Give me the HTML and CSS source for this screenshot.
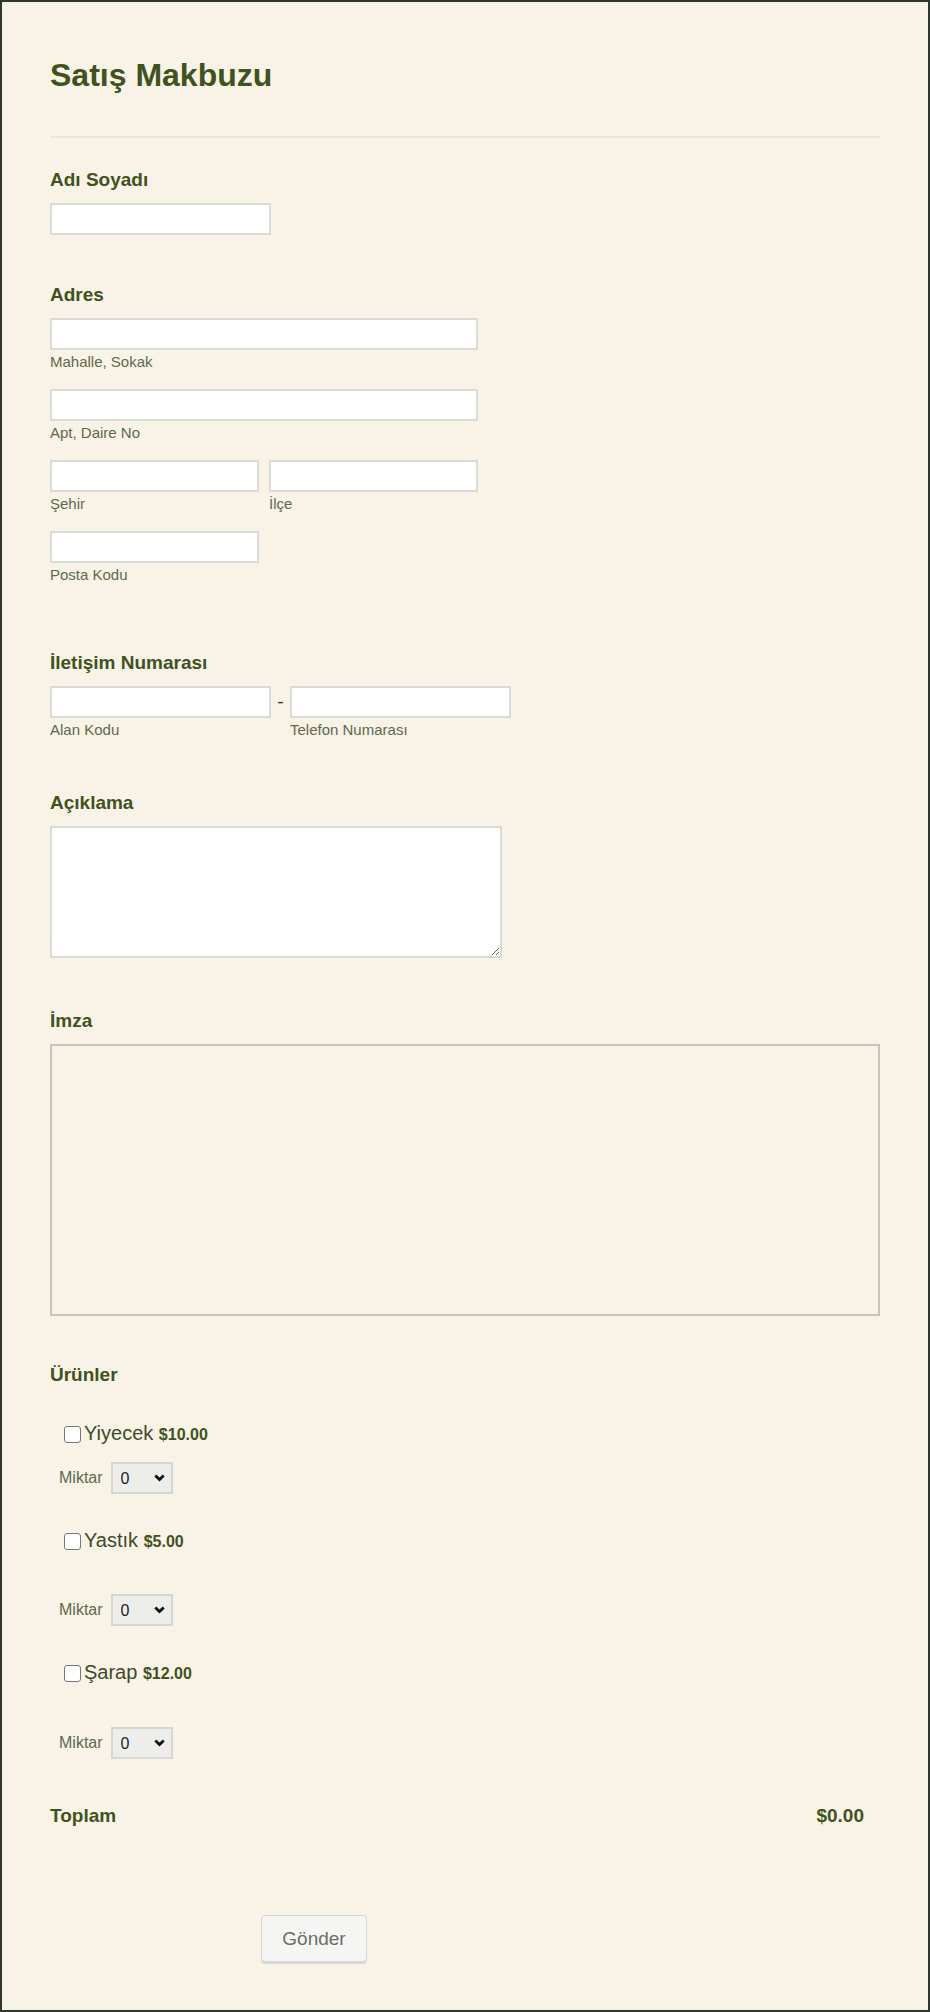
FILE: index.html
```html
<!DOCTYPE html>
<html lang="tr">
<head>
<meta charset="utf-8">
<title>Satış Makbuzu</title>
<link rel="stylesheet" href="styles.css">
</head>
<body>
<div class="page">
  <h1 class="title">Satış Makbuzu</h1>
  <div class="divider"></div>

  <div class="field f-name">
    <label class="label">Adı Soyadı</label>
    <input class="input w-short" type="text">
  </div>

  <div class="field f-address">
    <label class="label">Adres</label>
    <div class="addr-row">
      <div class="col">
        <input class="input w-long" type="text">
        <span class="sub">Mahalle, Sokak</span>
      </div>
    </div>
    <div class="addr-row next">
      <div class="col">
        <input class="input w-long" type="text">
        <span class="sub">Apt, Daire No</span>
      </div>
    </div>
    <div class="addr-row next pair">
      <div class="col">
        <input class="input w-half" type="text">
        <span class="sub">Şehir</span>
      </div>
      <div class="col">
        <input class="input w-half" type="text">
        <span class="sub">İlçe</span>
      </div>
    </div>
    <div class="addr-row next">
      <div class="col">
        <input class="input w-half" type="text">
        <span class="sub">Posta Kodu</span>
      </div>
    </div>
  </div>

  <div class="field f-phone">
    <label class="label">İletişim Numarası</label>
    <div class="phone-row">
      <div class="col">
        <input class="input w-short" type="text">
        <span class="sub">Alan Kodu</span>
      </div>
      <span class="dash">-</span>
      <div class="col">
        <input class="input w-short" type="text">
        <span class="sub">Telefon Numarası</span>
      </div>
    </div>
  </div>

  <div class="field f-desc">
    <label class="label">Açıklama</label>
    <textarea class="textarea"></textarea>
  </div>

  <div class="field f-sign">
    <label class="label">İmza</label>
    <div class="signature"></div>
  </div>

  <div class="field f-products">
    <label class="label">Ürünler</label>

    <div class="product first">
      <input class="check" type="checkbox">
      <span class="pname">Yiyecek <b class="price">$10.00</b></span>
    </div>
    <div class="qty q-first">
      <span class="qty-label">Miktar</span>
      <span class="select-wrap">
        <select class="select"><option>0</option></select>
        <svg class="chev" width="11" height="8" viewBox="0 0 11 8"><path d="M1.3 1.4 L5.5 5.6 L9.7 1.4" fill="none" stroke="#111" stroke-width="2.8"/></svg>
      </span>
    </div>

    <div class="product">
      <input class="check" type="checkbox">
      <span class="pname">Yastık <b class="price">$5.00</b></span>
    </div>
    <div class="qty">
      <span class="qty-label">Miktar</span>
      <span class="select-wrap">
        <select class="select"><option>0</option></select>
        <svg class="chev" width="11" height="8" viewBox="0 0 11 8"><path d="M1.3 1.4 L5.5 5.6 L9.7 1.4" fill="none" stroke="#111" stroke-width="2.8"/></svg>
      </span>
    </div>

    <div class="product">
      <input class="check" type="checkbox">
      <span class="pname">Şarap <b class="price">$12.00</b></span>
    </div>
    <div class="qty q-last">
      <span class="qty-label">Miktar</span>
      <span class="select-wrap">
        <select class="select"><option>0</option></select>
        <svg class="chev" width="11" height="8" viewBox="0 0 11 8"><path d="M1.3 1.4 L5.5 5.6 L9.7 1.4" fill="none" stroke="#111" stroke-width="2.8"/></svg>
      </span>
    </div>
  </div>

  <div class="total">
    <span class="total-label">Toplam</span>
    <span class="total-value">$0.00</span>
  </div>

  <div class="actions">
    <button class="submit" type="button">Gönder</button>
  </div>
</div>
</body>
</html>
```

FILE: styles.css
```css
html, body {
  margin: 0;
  padding: 0;
}
body {
  font-family: "Liberation Sans", Arial, sans-serif;
  background: #f9f2e6;
}
.page {
  box-sizing: border-box;
  width: 930px;
  min-height: 2012px;
  border: 2px solid #2f352f;
  background: #f9f2e6;
  padding: 54px 48px 0 48px;
}
.title {
  margin: 0;
  font-size: 32px;
  line-height: 38px;
  font-weight: bold;
  color: #3f5220;
}
.divider {
  margin-top: 42px;
  height: 2px;
  background: #ebe8e1;
}
.field {
  display: flex;
  flex-direction: column;
  align-items: flex-start;
}
.label {
  display: block;
  font-size: 19px;
  line-height: 22px;
  font-weight: bold;
  color: #3f5220;
  margin-bottom: 12px;
}
.f-name { margin-top: 31px; }
.f-address { margin-top: 49px; }
.f-phone { margin-top: 68px; }
.f-desc { margin-top: 53px; }
.f-sign { margin-top: 52px; }
.f-products { margin-top: 48px; }

.input {
  box-sizing: border-box;
  height: 32px;
  margin: 0;
  border: 2px solid #dadad6;
  background: #fff;
  font-family: inherit;
  font-size: 15px;
  padding: 0 6px;
}
.w-short { width: 221px; }
.w-long { width: 428px; }
.w-half { width: 209px; }

.col {
  display: flex;
  flex-direction: column;
}
.sub {
  margin-top: 3px;
  font-size: 15px;
  line-height: 18px;
  color: #5d6b4b;
}
.addr-row {
  display: flex;
  gap: 10px;
}
.addr-row.next { margin-top: 18px; }

.phone-row {
  display: flex;
  align-items: flex-start;
}
.dash {
  width: 19px;
  height: 32px;
  line-height: 32px;
  text-align: center;
  font-size: 19px;
  color: #333;
}

.textarea {
  box-sizing: border-box;
  width: 452px;
  height: 132px;
  margin: 0;
  border: 2px solid #dadad6;
  background: #fff;
  font-family: inherit;
}
.signature {
  box-sizing: border-box;
  width: 830px;
  height: 272px;
  border: 2px solid #c6c5bd;
}

.product {
  display: flex;
  align-items: flex-start;
  margin-top: 34px;
  margin-left: 14px;
  height: 24px;
}
.product.first { margin-top: 23px; }
.check {
  -webkit-appearance: none;
  appearance: none;
  box-sizing: border-box;
  width: 17px;
  height: 17px;
  margin: 5px 3px 0 0;
  border: 1.5px solid #767676;
  border-radius: 3px;
  background: #fff;
}
.pname {
  font-size: 20px;
  line-height: 24px;
  color: #3d4b2a;
}
.price {
  font-size: 16px;
  font-weight: bold;
  color: #3f5220;
}
.qty {
  display: flex;
  align-items: center;
  margin-left: 9px;
  margin-top: 42px;
  height: 32px;
}
.qty.q-first { margin-top: 17px; }
.qty.q-last { margin-top: 43px; }
.qty-label {
  font-size: 16px;
  color: #5d6b4b;
  margin-right: 8px;
}
.select-wrap {
  position: relative;
  display: inline-block;
  width: 62px;
  height: 32px;
}
.select {
  -webkit-appearance: none;
  appearance: none;
  box-sizing: border-box;
  width: 62px;
  height: 32px;
  margin: 0;
  border: 2px solid #d6d6d2;
  border-radius: 0;
  background: #ededeb;
  font-family: inherit;
  font-size: 16px;
  color: #222;
  padding: 0 0 0 8px;
}
.chev {
  position: absolute;
  right: 8px;
  top: 12px;
  pointer-events: none;
}

.total {
  display: flex;
  justify-content: space-between;
  margin-top: 46px;
  padding-right: 16px;
  font-size: 19px;
  line-height: 22px;
  font-weight: bold;
  color: #3f5220;
}
.actions {
  margin-top: 88px;
  padding-left: 211px;
}
.submit {
  box-sizing: border-box;
  width: 106px;
  height: 47px;
  border: 1px solid #d6d6d6;
  border-radius: 4px;
  background: #f5f5f4;
  box-shadow: 0 2px 0 #d8d8d6;
  font-family: inherit;
  font-size: 19px;
  color: #6b6e66;
  padding: 0;
}
```
